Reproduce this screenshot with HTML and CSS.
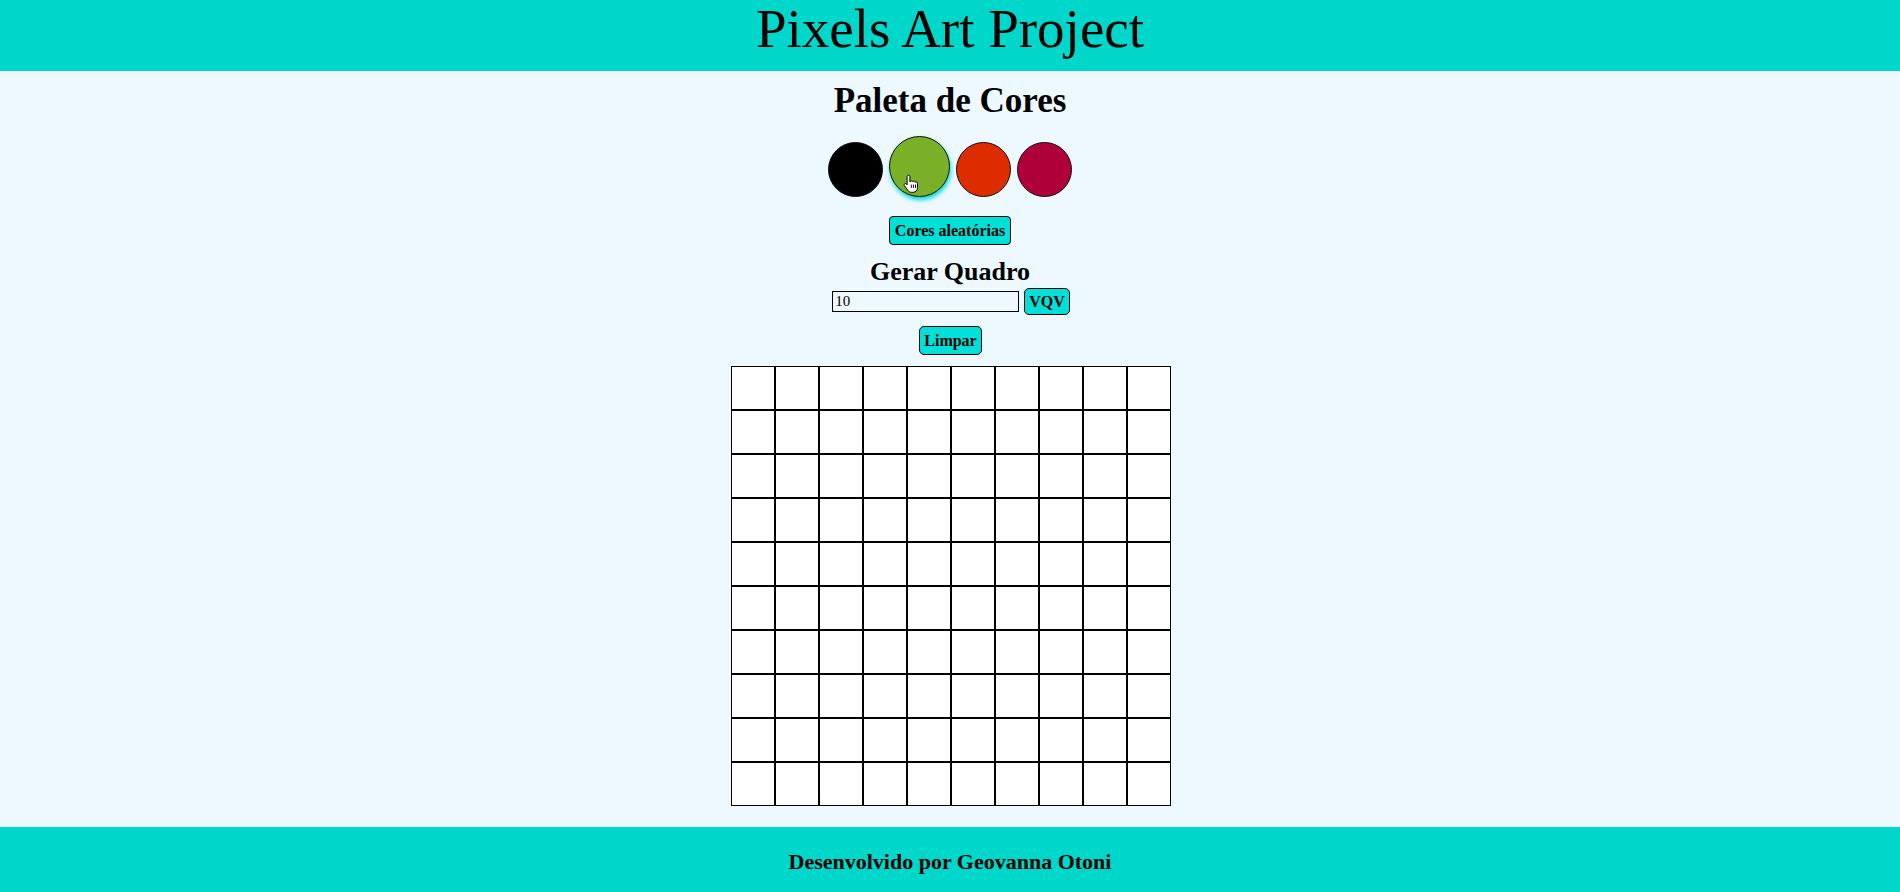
FILE: index.html
```html
<!DOCTYPE html>
<html lang="pt-BR">
<head>
<meta charset="utf-8">
<title>Pixels Art Project</title>
<link rel="stylesheet" href="styles.css">
</head>
<body>
<header class="top">
  <h1 class="title">Pixels Art Project</h1>
</header>
<main class="main">
  <h2 class="palette-title">Paleta de Cores</h2>
  <div class="palette">
    <div class="color c-black"></div>
    <div class="color c-green selected">
      <svg class="cursor" width="16" height="19" viewBox="0 0 16 19">
        <path d="M5.5 1.2c.8 0 1.4.6 1.4 1.4v5.2l.2-.1c.2-.5.7-.8 1.3-.8.6 0 1.1.4 1.3.9.2-.4.7-.7 1.2-.7.7 0 1.2.5 1.3 1.1.2-.2.5-.3.9-.3.8 0 1.4.6 1.4 1.4v4.4c0 2.6-1.8 4.6-4.4 4.6H8.3c-1.4 0-2.5-.6-3.3-1.7L1.4 11.6c-.4-.6-.3-1.4.3-1.8.6-.4 1.3-.3 1.8.2l.6.8V2.6c0-.8.6-1.4 1.4-1.4z" fill="#fff" stroke="#000" stroke-width="1"/>
        <path d="M8.3 10.5v3.5M10.4 10.5v3.5M12.5 10.5v3.5" stroke="#000" stroke-width="0.9"/>
      </svg>
    </div>
    <div class="color c-red"></div>
    <div class="color c-crimson"></div>
  </div>
  <button class="btn btn-random">Cores aleatórias</button>
  <h3 class="board-title">Gerar Quadro</h3>
  <div class="board-row">
    <input class="size-input" type="text" value="10">
    <button class="btn btn-vqv">VQV</button>
  </div>
  <button class="btn btn-clear">Limpar</button>
  <div class="board">
    <div class="pixel"></div><div class="pixel"></div><div class="pixel"></div><div class="pixel"></div><div class="pixel"></div><div class="pixel"></div><div class="pixel"></div><div class="pixel"></div><div class="pixel"></div><div class="pixel"></div>
    <div class="pixel"></div><div class="pixel"></div><div class="pixel"></div><div class="pixel"></div><div class="pixel"></div><div class="pixel"></div><div class="pixel"></div><div class="pixel"></div><div class="pixel"></div><div class="pixel"></div>
    <div class="pixel"></div><div class="pixel"></div><div class="pixel"></div><div class="pixel"></div><div class="pixel"></div><div class="pixel"></div><div class="pixel"></div><div class="pixel"></div><div class="pixel"></div><div class="pixel"></div>
    <div class="pixel"></div><div class="pixel"></div><div class="pixel"></div><div class="pixel"></div><div class="pixel"></div><div class="pixel"></div><div class="pixel"></div><div class="pixel"></div><div class="pixel"></div><div class="pixel"></div>
    <div class="pixel"></div><div class="pixel"></div><div class="pixel"></div><div class="pixel"></div><div class="pixel"></div><div class="pixel"></div><div class="pixel"></div><div class="pixel"></div><div class="pixel"></div><div class="pixel"></div>
    <div class="pixel"></div><div class="pixel"></div><div class="pixel"></div><div class="pixel"></div><div class="pixel"></div><div class="pixel"></div><div class="pixel"></div><div class="pixel"></div><div class="pixel"></div><div class="pixel"></div>
    <div class="pixel"></div><div class="pixel"></div><div class="pixel"></div><div class="pixel"></div><div class="pixel"></div><div class="pixel"></div><div class="pixel"></div><div class="pixel"></div><div class="pixel"></div><div class="pixel"></div>
    <div class="pixel"></div><div class="pixel"></div><div class="pixel"></div><div class="pixel"></div><div class="pixel"></div><div class="pixel"></div><div class="pixel"></div><div class="pixel"></div><div class="pixel"></div><div class="pixel"></div>
    <div class="pixel"></div><div class="pixel"></div><div class="pixel"></div><div class="pixel"></div><div class="pixel"></div><div class="pixel"></div><div class="pixel"></div><div class="pixel"></div><div class="pixel"></div><div class="pixel"></div>
    <div class="pixel"></div><div class="pixel"></div><div class="pixel"></div><div class="pixel"></div><div class="pixel"></div><div class="pixel"></div><div class="pixel"></div><div class="pixel"></div><div class="pixel"></div><div class="pixel"></div>
  </div>
</main>
<footer class="bottom">
  <h3 class="credit">Desenvolvido por Geovanna Otoni</h3>
</footer>
</body>
</html>
```

FILE: styles.css
```css
* { box-sizing: border-box; }

html, body {
  margin: 0;
  padding: 0;
}

body {
  background: #eef8ff;
  font-family: "Liberation Serif", "Times New Roman", serif;
  color: #000;
}

.top {
  background: #00d7cb;
  height: 71px;
  text-align: center;
}

.title {
  margin: 0;
  font-size: 55px;
  font-weight: normal;
  line-height: 58px;
}

.main {
  display: flex;
  flex-direction: column;
  align-items: center;
}

.palette-title {
  margin: 10px 0 0;
  font-size: 35px;
  line-height: 40px;
  font-weight: bold;
}

.palette {
  display: flex;
  align-items: flex-end;
  gap: 6px;
  margin-top: 15px;
  height: 61px;
}

.color {
  width: 55px;
  height: 55px;
  border-radius: 50%;
  border: 1px solid #111;
  position: relative;
}

.c-black { background: #000; }
.c-green { background: #7ab027; }
.c-red { background: #dc2c00; }
.c-crimson { background: #b0003a; }

.selected {
  width: 61px;
  height: 61px;
  box-shadow: 1px 3px 4px #00dcdc;
}

.cursor {
  position: absolute;
  left: 13px;
  top: 37px;
}

.btn {
  font-family: "Liberation Serif", "Times New Roman", serif;
  font-weight: bold;
  font-size: 16px;
  line-height: 19px;
  color: #000;
  background: #00e0d8;
  border: 1px solid #000;
  border-radius: 5px;
  padding: 4px 5px;
}

.btn-random {
  margin-top: 19px;
  border-radius: 4px;
}

.board-title {
  margin: 12px 0 0;
  font-size: 26px;
  line-height: 30px;
  font-weight: bold;
}

.board-row {
  display: flex;
  align-items: center;
  gap: 5px;
  height: 28px;
  margin-left: 2px;
}

.size-input {
  width: 187px;
  height: 21px;
  border: 1px solid #000;
  background: #eef8ff;
  font-family: "Liberation Serif", "Times New Roman", serif;
  font-size: 15px;
  padding: 0 2px;
  color: #000;
}

.btn-vqv {
  padding: 3px 4px;
  margin-top: 1px;
}

.btn-clear {
  margin-top: 11px;
  margin-left: 1px;
  padding: 4px 4px;
}

.board {
  margin-top: 11px;
  margin-left: 1px;
  display: grid;
  grid-template-columns: repeat(10, 44px);
  grid-auto-rows: 44px;
  margin-bottom: 21px;
}

.pixel {
  background: #fff;
  border: 1px solid #000;
}

.bottom {
  background: #00d7cb;
  height: 65px;
  padding-top: 22px;
  text-align: center;
}

.credit {
  margin: 0;
  font-size: 22px;
  line-height: 26px;
  font-weight: bold;
}
```
